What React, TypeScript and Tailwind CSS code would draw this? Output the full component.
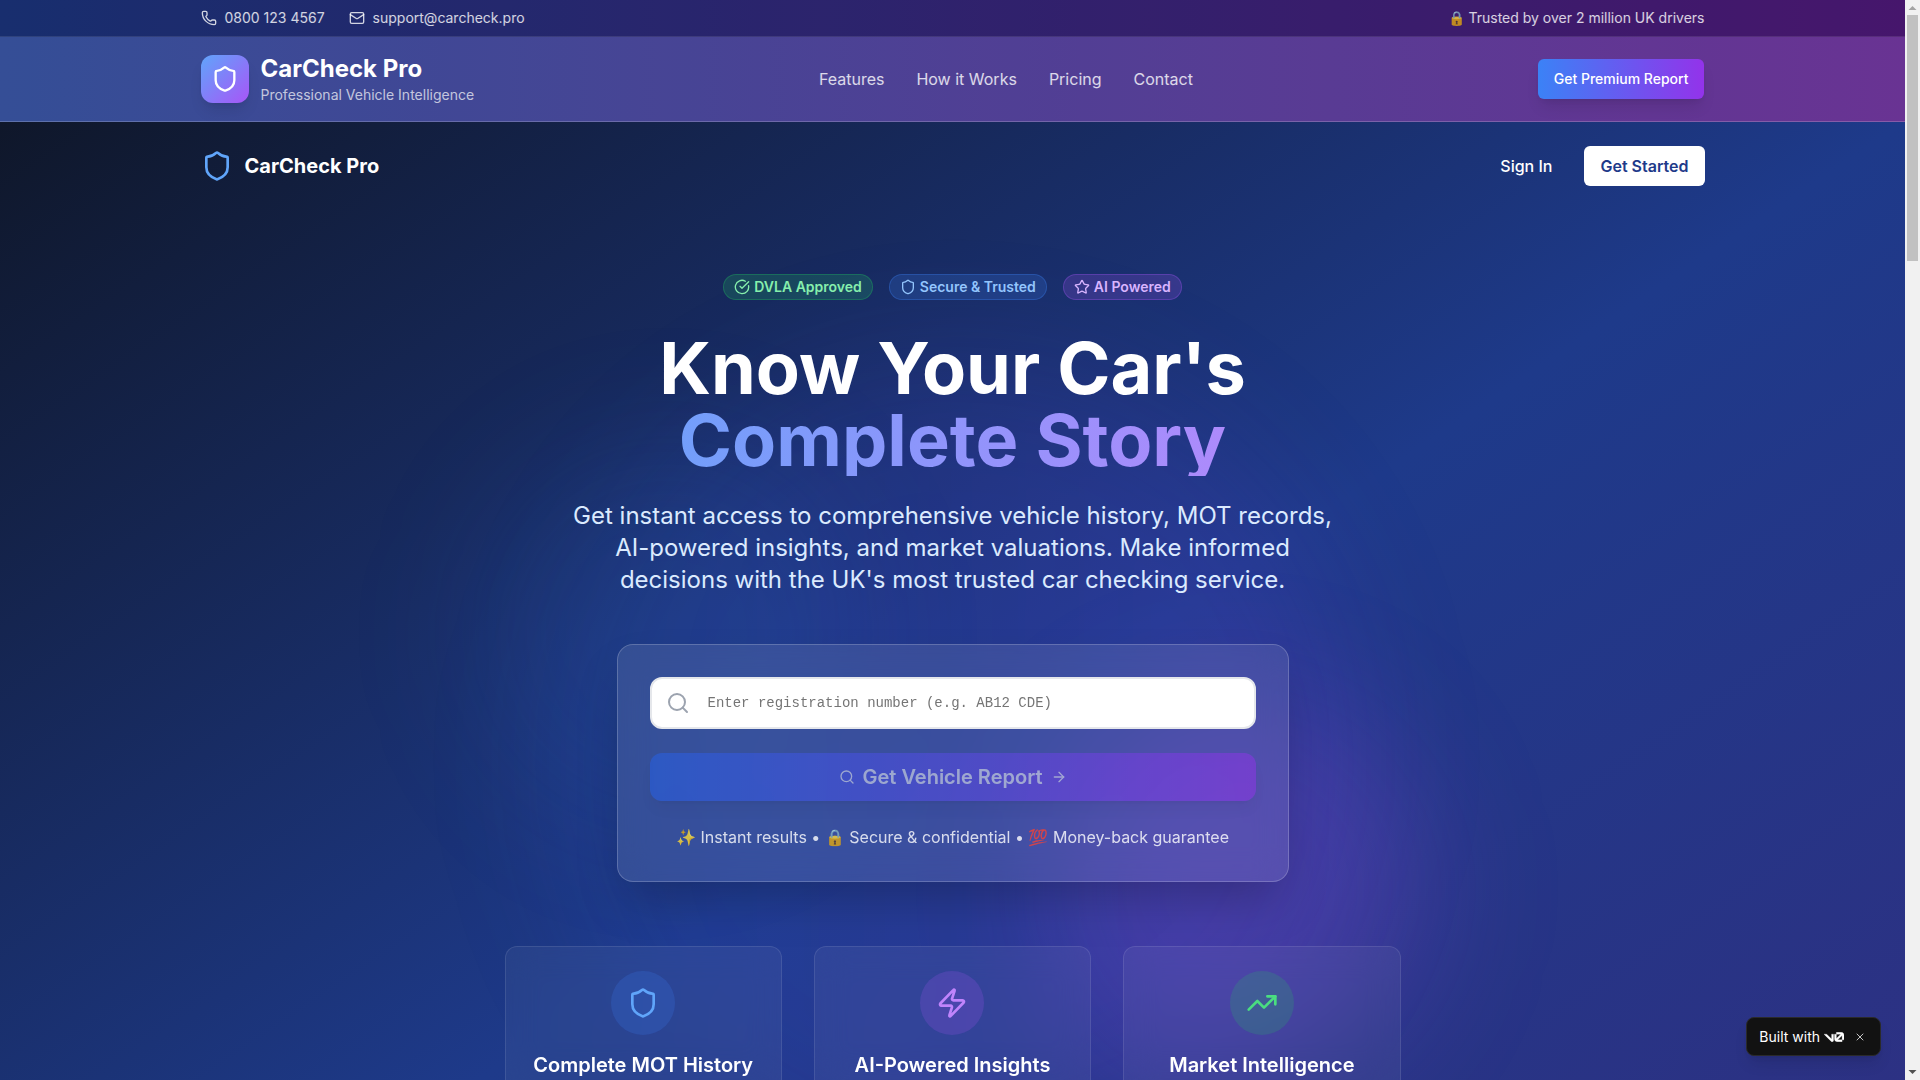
import React from "react";
import {
  ArrowRight,
  CircleCheckBig,
  Mail,
  Phone,
  Search,
  Shield,
  Star,
  TrendingUp,
  X,
  Zap,
} from "lucide-react";

const navLinks = [
  { label: "Features", href: "#features" },
  { label: "How it Works", href: "#how-it-works" },
  { label: "Pricing", href: "#pricing" },
  { label: "Contact", href: "#contact" },
];

const badges = [
  {
    label: "DVLA Approved",
    icon: CircleCheckBig,
    style: "border-[#22c55e]/30 bg-[#22c55e]/20 text-[#86efac]",
  },
  {
    label: "Secure & Trusted",
    icon: Shield,
    style: "border-[#3b82f6]/30 bg-[#3b82f6]/20 text-[#93c5fd]",
  },
  {
    label: "AI Powered",
    icon: Star,
    style: "border-[#a855f7]/30 bg-[#a855f7]/20 text-[#d8b4fe]",
  },
];

const features = [
  {
    title: "Complete MOT History",
    icon: Shield,
    circle: "bg-[#3b82f6]/20",
    color: "text-[#60a5fa]",
  },
  {
    title: "AI-Powered Insights",
    icon: Zap,
    circle: "bg-[#a855f7]/20",
    color: "text-[#c084fc]",
  },
  {
    title: "Market Intelligence",
    icon: TrendingUp,
    circle: "bg-[#22c55e]/20",
    color: "text-[#4ade80]",
  },
];

const Header = () => {
  return (
    <header className="bg-linear-to-r/srgb from-[#1e3a8a] to-[#581c87]">
      <div className="border-b border-white/10 bg-black/20">
        <div className="mx-auto flex max-w-[1536px] items-center justify-between px-4 py-2 text-sm text-white/80">
          <div className="flex items-center gap-6">
            <a href="tel:08001234567" className="flex items-center gap-2">
              <Phone className="h-4 w-4" />
              0800 123 4567
            </a>
            <a href="mailto:support@carcheck.pro" className="flex items-center gap-2">
              <Mail className="h-4 w-4" />
              support@carcheck.pro
            </a>
          </div>
          <p>🔒 Trusted by over 2 million UK drivers</p>
        </div>
      </div>

      <div className="border-b border-white/20 bg-white/10">
        <div className="mx-auto flex max-w-[1536px] items-center justify-between px-4 py-4">
          <a href="#home" className="flex items-center gap-3">
            <span className="flex h-12 w-12 items-center justify-center rounded-xl bg-linear-to-br/srgb from-[#60a5fa] to-[#a855f7] shadow-lg">
              <Shield className="h-7 w-7 text-white" />
            </span>
            <span>
              <span className="block text-2xl font-bold text-white">CarCheck Pro</span>
              <span className="block text-sm text-white/70">Professional Vehicle Intelligence</span>
            </span>
          </a>
          <nav className="flex items-center gap-8">
            {navLinks.map((link) => (
              <a key={link.label} href={link.href} className="text-white/80 hover:text-white">
                {link.label}
              </a>
            ))}
          </nav>
          <button
            type="button"
            className="h-10 rounded-md bg-linear-to-r/srgb from-[#3b82f6] to-[#9333ea] px-4 text-sm font-medium text-white shadow-lg"
          >
            Get Premium Report
          </button>
        </div>
      </div>
    </header>
  );
};

const SearchCard = () => {
  return (
    <form className="mx-auto mb-16 max-w-2xl rounded-2xl border border-white/20 bg-white/10 p-8 shadow-2xl backdrop-blur-lg">
      <div className="relative mb-6">
        <Search className="absolute top-1/2 left-4 h-6 w-6 -translate-y-1/2 text-[#9ca3af]" />
        <input
          type="text"
          aria-label="Registration number"
          placeholder="Enter registration number (e.g. AB12 CDE)"
          className="block h-13 w-full rounded-xl border-2 border-[#e5e7eb] bg-white pr-4 pl-14 font-['Liberation_Mono',monospace] text-sm text-gray-900 placeholder:text-[#757575]"
        />
      </div>
      <button
        type="submit"
        disabled
        className="mb-6 flex h-12 w-full items-center justify-center gap-2 rounded-xl bg-linear-to-r/srgb from-[#2563eb] to-[#9333ea] text-xl font-semibold text-white opacity-50 shadow-lg"
      >
        <Search className="h-4 w-4" />
        Get Vehicle Report
        <ArrowRight className="h-4 w-4" />
      </button>
      <p className="text-center text-white/80">
        ✨ Instant results • 🔒 Secure &amp; confidential • 💯 Money-back guarantee
      </p>
    </form>
  );
};

const Hero = () => {
  return (
    <section className="relative overflow-hidden bg-linear-to-br/srgb from-[#0f172a] via-[#1e3a8a] to-[#312e81] pb-32">
      {/* background glow */}
      <div className="absolute top-1/4 left-1/4 h-96 w-96 rounded-full bg-[#3b82f6]/10 blur-3xl" />
      <div className="absolute right-1/4 bottom-1/4 h-96 w-96 rounded-full bg-[#a855f7]/20 blur-3xl" />
      <div className="absolute top-1/2 left-1/2 h-[800px] w-[800px] -translate-x-1/2 -translate-y-1/2 rounded-full bg-linear-to-r/srgb from-[#2563eb]/10 to-[#7c3aed]/15 blur-3xl" />

      <div className="relative mx-auto max-w-[1536px] px-4">
        <div className="flex items-center justify-between py-6">
          <a href="#home" className="flex items-center gap-3">
            <Shield className="h-8 w-8 text-[#60a5fa]" />
            <span className="text-xl font-bold text-white">CarCheck Pro</span>
          </a>
          <div className="flex items-center gap-8">
            <a href="#signin" className="font-medium text-white">
              Sign In
            </a>
            <button type="button" className="h-10 rounded-md bg-white px-4 font-semibold text-[#1e3a8a]">
              Get Started
            </button>
          </div>
        </div>

        <div className="mx-auto max-w-4xl py-16 text-center">
          <div className="mb-8 flex items-center justify-center gap-4">
            {badges.map(({ label, icon: Icon, style }) => (
              <span
                key={label}
                className={`flex items-center gap-1 rounded-full border px-2.5 py-0.5 text-sm font-semibold ${style}`}
              >
                <Icon className="h-4 w-4" />
                {label}
              </span>
            ))}
          </div>

          <h1 className="mb-6 text-7xl leading-none font-bold text-white">
            Know Your Car's
            <span className="block bg-linear-to-r/srgb from-[#60a5fa] to-[#c084fc] bg-clip-text text-transparent">
              Complete Story
            </span>
          </h1>
          <p className="mx-auto mb-12 max-w-3xl text-2xl text-[#dbeafe]">
            Get instant access to comprehensive vehicle history, MOT records, AI-powered insights, and market
            valuations. Make informed decisions with the UK's most trusted car checking service.
          </p>

          <SearchCard />

          <div className="grid grid-cols-3 gap-8">
            {features.map(({ title, icon: Icon, circle, color }) => (
              <article
                key={title}
                className="rounded-xl border border-white/10 bg-white/5 px-4 pt-6 pb-32 backdrop-blur-lg"
              >
                <div className={`mx-auto mb-4 flex h-16 w-16 items-center justify-center rounded-full ${circle}`}>
                  <Icon className={`h-8 w-8 ${color}`} />
                </div>
                <h3 className="text-xl font-semibold text-white">{title}</h3>
              </article>
            ))}
          </div>
        </div>
      </div>
    </section>
  );
};

const BuiltWith = () => {
  return (
    <div className="absolute right-6 bottom-6 flex h-[39px] items-center rounded-lg border border-[#2a2a2a] bg-[#121212] pr-2 pl-3 text-sm text-white shadow-lg">
      <a href="#v0" aria-label="Built with v0" className="flex items-center gap-1">
        Built with
        <svg viewBox="0 0 147 70" className="h-[10px] w-5" fill="currentColor" stroke="currentColor" strokeWidth="2" aria-hidden="true">
          <path d="M56 50.2031V14H70V60.1562C70 65.5928 65.5928 70 60.1562 70C57.5605 70 54.9982 68.9992 53.1562 67.1573L0 14H19.7969L56 50.2031Z" />
          <path d="M147 56H133V23.9531L100.953 56H133V70H96.6875C85.8144 70 77 61.1856 77 50.3125V14H91V46.1562L123.156 14H91V0H127.312C138.186 0 147 8.81439 147 19.6875V56Z" />
        </svg>
      </a>
      <button type="button" aria-label="Close" className="ml-1 flex h-6 w-6 items-center justify-center">
        <X className="h-3 w-3" strokeWidth={1.5} />
      </button>
    </div>
  );
};

const ScrollBar = () => {
  return (
    <div className="flex w-[15px] shrink-0 flex-col items-center bg-[#f1f1f1]" aria-hidden="true">
      <svg viewBox="0 0 15 15" className="h-[15px] w-[15px] shrink-0">
        <path d="M3.5 10L7.5 6L11.5 10Z" fill="#a3a3a3" />
      </svg>
      <div className="h-[246px] w-[11px] bg-[#c1c1c1]" />
      <svg viewBox="0 0 15 15" className="mt-auto h-[15px] w-[15px] shrink-0">
        <path d="M3.5 5L7.5 9L11.5 5Z" fill="#505050" />
      </svg>
    </div>
  );
};

const App = () => {
  return (
    <div className="flex h-screen font-['Inter',sans-serif]">
      <div className="relative min-w-0 flex-1">
        <div className="h-full overflow-y-auto [scrollbar-width:none]">
          <Header />
          <Hero />
        </div>
        <BuiltWith />
      </div>
      <ScrollBar />
    </div>
  );
};

export default App;
